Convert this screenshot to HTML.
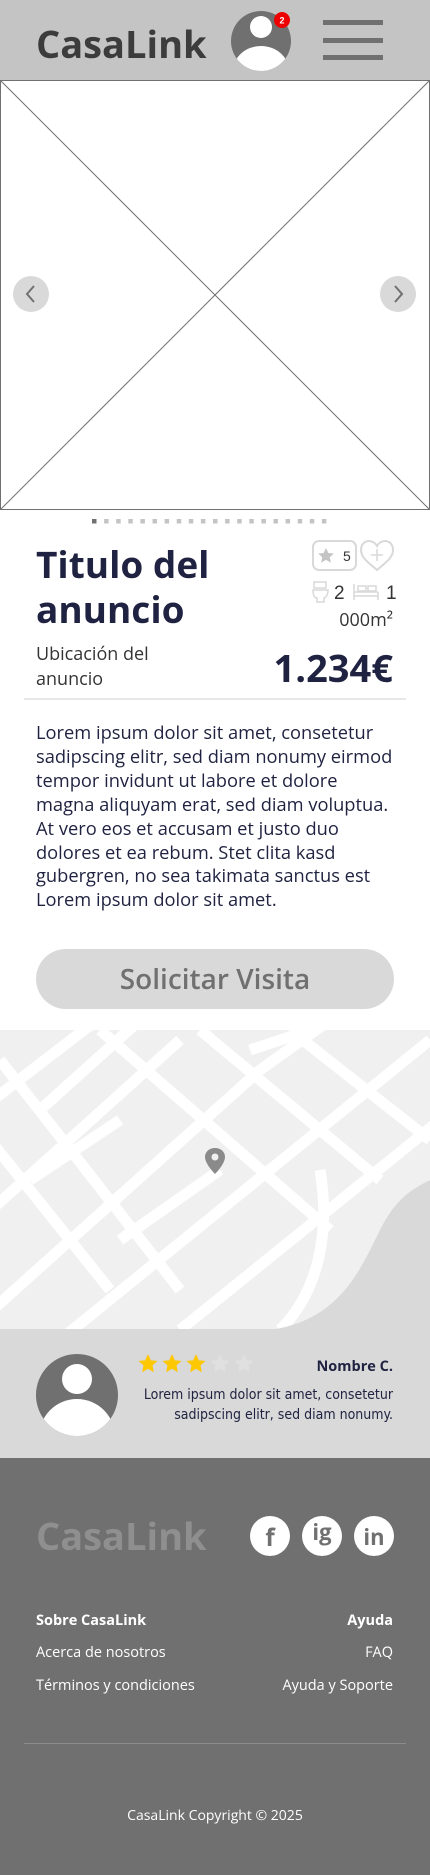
<!DOCTYPE html>
<html><head><meta charset="utf-8"><style>
*{margin:0;padding:0;box-sizing:border-box}
body{width:430px;height:1875px;font-family:"Open Sans","Liberation Sans",sans-serif;background:#fff;position:relative;overflow:hidden;color:#1f2240}
.a{position:absolute}
</style></head><body>
<div class="a" style="left:0;top:0;width:430px;height:80px;background:#c4c4c4"></div>
<div class="a" style="left:36px;top:18px;font-size:38px;font-weight:bold;color:#3c3c3c">CasaLink</div>
<svg class="a" style="left:229px;top:9px" width="66" height="64" viewBox="0 0 66 64">
<defs><clipPath id="c1"><circle cx="32" cy="32" r="30"/></clipPath></defs>
<circle cx="32" cy="32" r="30" fill="#707070"/>
<g clip-path="url(#c1)" fill="#fff"><circle cx="32" cy="18" r="11"/><ellipse cx="32" cy="62" rx="28" ry="25"/></g>
<circle cx="53" cy="11" r="8" fill="#e00"/><text x="53" y="14.5" font-size="9" fill="#fff" text-anchor="middle" font-weight="bold" font-family="Liberation Sans">2</text>
</svg>
<div class="a" style="left:323px;top:20px;width:60px;height:5px;background:#707070"></div>
<div class="a" style="left:323px;top:38px;width:60px;height:5px;background:#707070"></div>
<div class="a" style="left:323px;top:55px;width:60px;height:5px;background:#707070"></div>
<svg class="a" style="left:0;top:80px" width="430" height="430">
<rect x="0.5" y="0.5" width="429" height="429" fill="#fff" stroke="#707070"/>
<line x1="0" y1="0" x2="430" y2="430" stroke="#707070"/><line x1="430" y1="0" x2="0" y2="430" stroke="#707070"/>
<circle cx="31" cy="214" r="18" fill="#d9d9d9"/><path d="M34 206 L27 214 L34 222" stroke="#707070" stroke-width="2" fill="none"/>
<circle cx="398" cy="214" r="18" fill="#d9d9d9"/><path d="M395 206 L402 214 L395 222" stroke="#707070" stroke-width="2" fill="none"/>
</svg>
<svg class="a" style="left:92px;top:519px" width="250" height="6" id="dots"></svg>
<script>var s='';for(var i=0;i<20;i++){s+='<rect x="'+(i*12.1)+'" y="0" width="4.5" height="4.5" fill="'+(i?'#c4c4c4':'#707070')+'"/>';}document.getElementById('dots').innerHTML=s;</script>
<div class="a" style="left:36px;top:541px;font-size:37px;font-weight:bold;line-height:45px">Titulo del<br>anuncio</div>
<svg class="a" style="left:311px;top:539px" width="86" height="36">
<rect x="2" y="2" width="43" height="29" rx="6" fill="none" stroke="#d9d9d9" stroke-width="2"/>
<path d="M15 9 l2.4 5 5.4.6-4 3.7 1.1 5.3-4.9-2.7-4.9 2.7 1.1-5.3-4-3.7 5.4-.6z" fill="#c4c4c4"/>
<text x="32" y="22" font-size="14" fill="#333" font-family="Liberation Sans">5</text>
<path d="M66 31 C58 24 50 19 50 11 C50 5 54 2 58 2 C62 2 65 5 66 7 C67 5 70 2 74 2 C78 2 82 5 82 11 C82 19 74 24 66 31Z" fill="none" stroke="#d9d9d9" stroke-width="2"/>
<path d="M66 10v12M60 16h12" stroke="#d9d9d9" stroke-width="1.5"/>
</svg>
<svg class="a" style="left:312px;top:580px" width="85" height="24">
<rect x="2" y="2" width="12" height="6" fill="none" stroke="#d9d9d9" stroke-width="1.5"/><path d="M1 10h15c0 6-3 8-4 8v4h-7v-4c-2 0-4-2-4-8z" fill="none" stroke="#d9d9d9" stroke-width="1.5"/>
<text x="22" y="19" font-size="19" fill="#333" font-family="Liberation Sans">2</text>
<path d="M42 4v16M66 12v8M42 12h24M42 16h24" stroke="#d9d9d9" stroke-width="1.5" fill="none"/><rect x="46" y="6" width="8" height="5" fill="none" stroke="#d9d9d9" stroke-width="1.5"/><rect x="56" y="6" width="8" height="5" fill="none" stroke="#d9d9d9" stroke-width="1.5"/>
<text x="74" y="19" font-size="19" fill="#333" font-family="Liberation Sans">1</text>
</svg>
<div class="a" style="right:37px;top:608px;font-size:18px;color:#333">000m²</div>
<div class="a" style="left:36px;top:642px;font-size:18px;line-height:25px;color:#333">Ubicación del<br>anuncio</div>
<div class="a" style="right:37px;top:642px;font-size:38px;font-weight:bold">1.234€</div>
<div class="a" style="left:24px;top:698px;width:382px;height:2px;background:#e8e8e8"></div>
<div class="a" style="left:36px;top:721px;width:360px;font-size:18.3px;line-height:23.9px;color:#1f2240">Lorem ipsum dolor sit amet, consetetur sadipscing elitr, sed diam nonumy eirmod tempor invidunt ut labore et dolore magna aliquyam erat, sed diam voluptua. At vero eos et accusam et justo duo dolores et ea rebum. Stet clita kasd gubergren, no sea takimata sanctus est Lorem ipsum dolor sit amet.</div>
<div class="a" style="left:36px;top:949px;width:358px;height:60px;border-radius:30px;background:#d9d9d9;text-align:center;line-height:60px;font-size:28px;font-weight:600;color:#707070">Solicitar Visita</div>
<svg class="a" style="left:0;top:1030px" width="430" height="300">
<rect width="430" height="300" fill="#f0f0f0"/>
<g stroke="#fff" stroke-width="11" fill="none">
<path d="M-20 80 L110 -20"/><path d="M-20 190 L180 10 M140 -10 L40 80"/><path d="M-30 300 L260 40 L330 -10"/><path d="M60 310 L430 10"/>
<path d="M180 300 L440 90"/><path d="M0 30 L180 260 M-10 110 L110 260"/><path d="M100 0 L330 200"/><path d="M200 0 L380 150"/><path d="M290 0 L430 110"/>
<path d="M30 150 L120 90"/><path d="M120 210 L220 140"/><path d="M250 20 L310 0"/>
<path d="M320 140 C330 200 320 260 280 300"/>
</g>
<path d="M270 300 C340 290 360 240 380 200 C395 170 410 160 430 150 L430 300Z" fill="#d9d9d9"/>
<path d="M215 118 c-6 0-10 4-10 9 0 7 10 17 10 17s10-10 10-17c0-5-4-9-10-9z" fill="#8a8a8a"/><circle cx="215" cy="127" r="3.5" fill="#f0f0f0"/>
</svg>
<div class="a" style="left:0;top:1329px;width:430px;height:129px;background:#d9d9d9"></div>
<svg class="a" style="left:36px;top:1354px" width="82" height="82"><defs><clipPath id="c2"><circle cx="41" cy="41" r="41"/></clipPath></defs><circle cx="41" cy="41" r="41" fill="#707070"/><g clip-path="url(#c2)" fill="#fff"><circle cx="41" cy="25" r="15"/><ellipse cx="41" cy="83" rx="38" ry="38"/></g></svg>
<svg class="a" style="left:137px;top:1353px" width="120" height="22" id="stars"></svg>
<script>var t='';for(var j=0;j<5;j++){var x=j*24+11;t+='<path transform="translate('+x+',11)" d="M0 -10 L2.9 -3.6 9.5 -3.1 4.5 1.4 5.9 8.1 0 4.7 -5.9 8.1 -4.5 1.4 -9.5 -3.1 -2.9 -3.6Z" fill="'+(j<3?'#fdc800':'#e0e0e0')+'"/>';}document.getElementById('stars').innerHTML=t;</script>
<div class="a" style="right:37px;top:1357px;font-size:14.5px;font-weight:bold">Nombre C.</div>
<div class="a" style="right:37px;top:1385px;font-size:14px;line-height:20px;text-align:right;color:#1f2240;font-family:'DejaVu Sans Condensed','Liberation Sans',sans-serif;width:300px">Lorem ipsum dolor sit amet, consetetur sadipscing elitr, sed diam nonumy.</div>
<div class="a" style="left:0;top:1458px;width:430px;height:417px;background:#707070"></div>
<div class="a" style="left:36px;top:1510px;font-size:38px;font-weight:bold;color:#8f8f8f">CasaLink</div>
<div class="a" style="left:250px;top:1516px;width:40px;height:40px;border-radius:50%;background:#fff;color:#707070;font-weight:bold;font-size:24px;text-align:center;line-height:44px">f</div>
<div class="a" style="left:302px;top:1516px;width:40px;height:40px;border-radius:50%;background:#fff;color:#707070;font-weight:bold;font-size:22px;text-align:center;line-height:32px">ig</div>
<div class="a" style="left:354px;top:1516px;width:40px;height:40px;border-radius:50%;background:#fff;color:#707070;font-weight:bold;font-size:22px;text-align:center;line-height:42px">in</div>
<div class="a" style="left:36px;top:1611px;font-size:14.5px;font-weight:bold;color:#fff">Sobre CasaLink</div>
<div class="a" style="right:37px;top:1611px;font-size:14.5px;font-weight:bold;color:#fff">Ayuda</div>
<div class="a" style="left:36px;top:1643px;font-size:14.5px;color:#fff">Acerca de nosotros</div>
<div class="a" style="right:37px;top:1643px;font-size:14.5px;color:#fff">FAQ</div>
<div class="a" style="left:36px;top:1676px;font-size:14.5px;color:#fff">Términos y condiciones</div>
<div class="a" style="right:37px;top:1676px;font-size:14.5px;color:#fff">Ayuda y Soporte</div>
<div class="a" style="left:24px;top:1743px;width:382px;height:1px;background:#8c8c8c"></div>
<div class="a" style="left:0;top:1806px;width:430px;text-align:center;font-size:14px;color:#fff">CasaLink Copyright © 2025</div>
</body></html>
